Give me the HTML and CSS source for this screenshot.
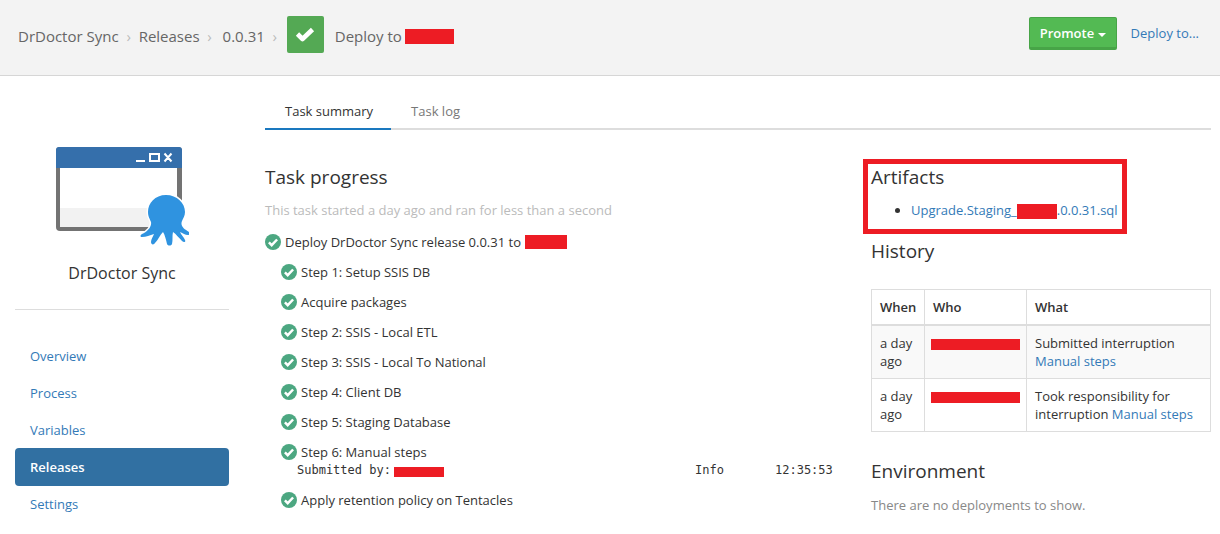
FILE: index.html
```html
<!DOCTYPE html>
<html lang="en">
<head>
    <meta charset="UTF-8">
    <meta name="viewport" content="width=device-width, initial-scale=1.0">
    <title>Deploy to - DrDoctor Sync</title>
    <link rel="stylesheet" href="styles.css">
</head>
<body>
    <!-- Shared icon shapes -->
    <svg class="sprite" aria-hidden="true">
        <symbol id="tick" viewBox="0 0 16 16">
            <circle cx="8" cy="8" r="8" fill="#4ca781"/>
            <path d="M3.9 8.300l2.800 2.800 5.400-5.600" fill="none" stroke="#fff" stroke-width="2.500"/>
        </symbol>
    </svg>

    <header class="header">
        <nav class="breadcrumb">
            <a class="crumb" href="#">DrDoctor Sync</a>
            <span class="sep">›</span>
            <a class="crumb" href="#">Releases</a>
            <span class="sep">›</span>
            <a class="crumb crumb-version" href="#">0.0.31</a>
            <span class="sep">›</span>
            <span class="state">
                <svg width="20" height="20" viewBox="0 0 20 20"><path d="M2.500 9l5 5L17.500 4.500" fill="none" stroke="#fff" stroke-width="4.600" stroke-linejoin="round"/></svg>
            </span>
            <span class="crumb">Deploy to</span>
            <span class="redacted redacted-title"></span>
        </nav>
        <div class="actions">
            <button class="btn-promote" type="button">Promote <span class="caret"></span></button>
            <a href="#">Deploy to...</a>
        </div>
    </header>

    <div class="page">
        <aside class="sidebar">
            <div class="project">
                <svg class="logo" width="134" height="100" viewBox="0 0 134 100">
                    <rect x="1" y="1" width="126" height="84" rx="4" fill="#737373"/>
                    <path d="M5 22h117v59H5z" fill="#fff"/>
                    <path d="M5 62h117v19H5z" fill="#f2f2f2"/>
                    <path d="M1 22V4q0-3 3-3h120q3 0 3 3v18z" fill="#356fab"/>
                    <path d="M81 15h9M95 8h9v7h-9zM109.500 7.500l7 8M116.500 7.500l-7 8" fill="none" stroke="#fff" stroke-width="2"/>
                    <path d="M111 49c-11 0-18 8-18 17 0 5 2 7 3 10 1 5-4 10-9 12-2 1-2 3 0 3 4 0 8-2 12-3-1 3-3 5-3 8 0 3 3 3 4 1 3-3 5-8 8-11 2 3 3 8 4 12 1 2 4 2 5 0 1-4 0-8 1-12 3 2 6 6 9 9 2 2 4 1 3-1-1-3-4-5-5-8 3 1 5 3 8 3 2 0 2-2 1-3-5-3-9-6-7-11 1-3 3-5 3-9 0-9-8-17-19-17z" fill="#2f93e0" stroke="#fff" stroke-width="3" paint-order="stroke"/>
                </svg>
                <h2 class="project-name">DrDoctor Sync</h2>
            </div>
            <nav class="side-nav">
                <a href="#">Overview</a>
                <a href="#">Process</a>
                <a href="#">Variables</a>
                <a class="active" href="#">Releases</a>
                <a href="#">Settings</a>
            </nav>
        </aside>

        <main class="main">
            <nav class="tabs">
                <a class="tab tab-active" href="#">Task summary</a>
                <a class="tab" href="#">Task log</a>
            </nav>

            <div class="columns">
                <section class="progress">
                    <h3>Task progress</h3>
                    <p class="started">This task started a day ago and ran for less than a second</p>
                    <div class="task">
                        <svg class="tick"><use href="#tick"/></svg>
                        <span>Deploy DrDoctor Sync release 0.0.31 to</span>
                        <span class="redacted redacted-target"></span>
                    </div>
                    <ul class="steps">
                        <li class="task"><svg class="tick"><use href="#tick"/></svg>Step 1: Setup SSIS DB</li>
                        <li class="task"><svg class="tick"><use href="#tick"/></svg>Acquire packages</li>
                        <li class="task"><svg class="tick"><use href="#tick"/></svg>Step 2: SSIS - Local ETL</li>
                        <li class="task"><svg class="tick"><use href="#tick"/></svg>Step 3: SSIS - Local To National</li>
                        <li class="task"><svg class="tick"><use href="#tick"/></svg>Step 4: Client DB</li>
                        <li class="task"><svg class="tick"><use href="#tick"/></svg>Step 5: Staging Database</li>
                        <li>
                            <div class="task task-with-log"><svg class="tick"><use href="#tick"/></svg>Step 6: Manual steps</div>
                            <div class="log">
                                <span class="log-message">Submitted by:<span class="redacted redacted-log"></span></span>
                                <span class="log-level">Info</span>
                                <span class="log-time">12:35:53</span>
                            </div>
                        </li>
                        <li class="task"><svg class="tick"><use href="#tick"/></svg>Apply retention policy on Tentacles</li>
                    </ul>
                </section>

                <aside class="details">
                    <section class="artifacts">
                        <h3>Artifacts</h3>
                        <ul>
                            <li><a href="#">Upgrade.Staging_<span class="redacted redacted-file"></span>.0.0.31.sql</a></li>
                        </ul>
                    </section>

                    <h3>History</h3>
                    <table class="history">
                        <thead>
                            <tr>
                                <th class="col-when">When</th>
                                <th class="col-who">Who</th>
                                <th>What</th>
                            </tr>
                        </thead>
                        <tbody>
                            <tr>
                                <td>a day ago</td>
                                <td class="who"><span class="redacted redacted-user"></span></td>
                                <td>Submitted interruption <a href="#">Manual steps</a></td>
                            </tr>
                            <tr>
                                <td>a day ago</td>
                                <td class="who"><span class="redacted redacted-user"></span></td>
                                <td>Took responsibility for interruption <a href="#">Manual steps</a></td>
                            </tr>
                        </tbody>
                    </table>

                    <h3>Environment</h3>
                    <p class="empty">There are no deployments to show.</p>
                </aside>
            </div>
        </main>
    </div>
</body>
</html>
```

FILE: styles.css
```css
* {
    box-sizing: border-box;
}
body {
    margin: 0;
    background: #fff;
    color: #333;
    font-family: "Open Sans", "Noto Sans", sans-serif;
    font-size: 13px;
    line-height: 18px;
}
a {
    color: #337ab7;
    text-decoration: none;
}
h3 {
    margin: 0;
    font-size: 19px;
    font-weight: 400;
    line-height: 24px;
}
p {
    margin: 0;
}
ul {
    margin: 0;
    padding: 0;
    list-style: none;
}
.sprite {
    display: none;
}
.redacted {
    display: inline-block;
    flex: none;
    background: #ed1c24;
}

/* Header */
.header {
    display: flex;
    justify-content: space-between;
    align-items: flex-start;
    padding: 16px 21px 18px 18px;
    background: #f3f3f3;
    border-bottom: 1px solid #d6d6d6;
}
.breadcrumb {
    display: flex;
    align-items: flex-start;
    font-size: 15px;
    line-height: 41px;
}
.crumb {
    color: #666;
}
.crumb-version {
    margin-left: 3px;
}
.sep {
    width: 20px;
    color: #bbb;
    text-align: center;
}
.state {
    display: flex;
    align-items: center;
    justify-content: center;
    width: 37px;
    height: 37px;
    margin: 0 11px 0 2px;
    background: #54a954;
    border-radius: 2px;
}
.redacted-title {
    width: 49px;
    height: 15px;
    margin: 13px 0 0 3px;
}
.actions {
    display: flex;
    align-items: center;
    gap: 14px;
    line-height: 35px;
}
.btn-promote {
    width: 88px;
    height: 33px;
    padding: 0;
    border: 1px solid #47a447;
    border-bottom-width: 3px;
    border-radius: 2px;
    background: #53ba53;
    color: #fff;
    font: 600 13px "Open Sans", "Noto Sans", sans-serif;
}
.caret {
    display: inline-block;
    border: 4px solid transparent;
    border-top-color: #fff;
    border-bottom: 0;
    vertical-align: 1px;
}

/* Page */
.page {
    display: flex;
    padding: 15px 9px 15px 15px;
}
.sidebar {
    flex: none;
    width: 214px;
    margin-right: 36px;
}
.project {
    padding: 55px 0 24px;
    border-bottom: 1px solid #ddd;
    text-align: center;
}
.logo {
    display: block;
    margin: 0 auto 15px;
}
.project-name {
    margin: 0;
    font-size: 16px;
    font-weight: 400;
    line-height: 24px;
}
.side-nav {
    display: flex;
    flex-direction: column;
    padding-top: 27px;
}
.side-nav a {
    margin-bottom: -1px;
    padding: 10px 15px;
    border-radius: 4px;
}
.side-nav .active {
    background: #3170a2;
    color: #fff;
    font-weight: 600;
}

.main {
    flex: 1;
}
.tabs {
    display: flex;
    border-bottom: 2px solid #ddd;
}
.tab {
    margin-bottom: -2px;
    padding: 11px 18px 8px 20px;
    border-bottom: 2px solid transparent;
    color: #777;
}
.tab-active {
    border-bottom-color: #1a78bf;
    color: #333;
}
.columns {
    display: flex;
    gap: 36px;
    padding-top: 35px;
}

/* Task progress */
.progress {
    flex: 1;
}
.started {
    margin: 12px 0 8px;
    color: #bbb;
}
.task {
    display: flex;
    align-items: center;
    height: 30px;
}
.task-with-log {
    height: 24px;
    padding-top: 6px;
}
.tick {
    flex: none;
    width: 16px;
    height: 16px;
    margin-right: 4px;
}
.redacted-target {
    width: 42px;
    height: 14px;
    margin-left: 4px;
}
.steps {
    padding-left: 16px;
}
.log {
    display: flex;
    height: 24px;
    padding-left: 16px;
    font-family: "DejaVu Sans Mono", "Liberation Mono", monospace;
    font-size: 12px;
}
.log-message {
    flex: 1;
}
.log-level {
    width: 80px;
}
.log-time {
    width: 60px;
}
.redacted-log {
    width: 50px;
    height: 10px;
    margin-left: 3px;
    vertical-align: -3px;
}

/* Details */
.details {
    flex: none;
    width: 340px;
}
.artifacts {
    width: 264px;
    margin: -6px 0 5px -8px;
    padding: 1px 3px 10px;
    border: 5px solid #ed1c24;
}
.artifacts ul {
    margin-top: 12px;
    padding-left: 40px;
    list-style: disc;
}
.redacted-file {
    width: 40px;
    height: 15px;
    vertical-align: -4px;
}
.history {
    width: 100%;
    margin: 26px 0 27px;
    border-collapse: collapse;
    table-layout: fixed;
}
.history th,
.history td {
    padding: 8px;
    border: 1px solid #ddd;
    text-align: left;
    vertical-align: top;
}
.history th {
    border-bottom-width: 2px;
    font-weight: 600;
}
.history tbody tr:nth-child(odd) {
    background: #f9f9f9;
}
.history .col-when {
    width: 53px;
}
.history .col-who {
    width: 102px;
}
.history .who {
    padding: 8px 6px;
}
.redacted-user {
    width: 89px;
    height: 11px;
    vertical-align: -2px;
}
.empty {
    margin-top: 13px;
    color: #888;
}
```
